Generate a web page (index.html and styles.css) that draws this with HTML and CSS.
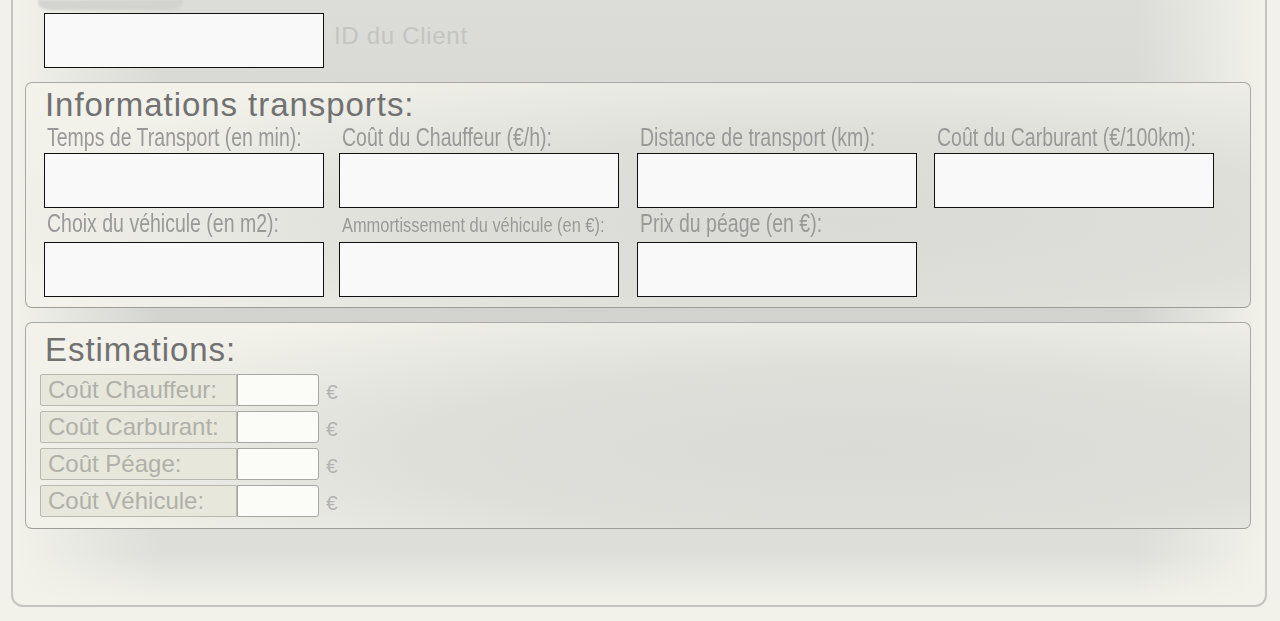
FILE: index.html
```html
<!DOCTYPE html>
<html lang="fr">
<head>
<meta charset="utf-8">
<title>Estimation transport</title>
<link rel="stylesheet" href="styles.css">
</head>
<body>
<div class="panel">
  <div class="blob"></div>
  <div class="id-row">
    <input class="box" type="text">
    <span class="id-label">ID du Client</span>
  </div>

  <div class="group info">
    <h2 class="title">Informations transports:</h2>
    <div class="fields">
      <div class="field top"><label class="flabel"><span>Temps de Transport (en min):</span></label><input class="box" type="text"></div>
      <div class="field top"><label class="flabel"><span>Coût du Chauffeur (€/h):</span></label><input class="box" type="text"></div>
      <div class="field top"><label class="flabel"><span>Distance de transport (km):</span></label><input class="box" type="text"></div>
      <div class="field top"><label class="flabel"><span>Coût du Carburant (€/100km):</span></label><input class="box" type="text"></div>
      <div class="field"><label class="flabel"><span>Choix du véhicule (en m2):</span></label><input class="box" type="text"></div>
      <div class="field"><label class="flabel small"><span>Ammortissement du véhicule (en €):</span></label><input class="box" type="text"></div>
      <div class="field"><label class="flabel"><span>Prix du péage (en €):</span></label><input class="box" type="text"></div>
    </div>
  </div>

  <div class="group est">
    <h2 class="title">Estimations:</h2>
    <div class="rows">
      <div class="row"><span class="rlabel">Coût Chauffeur:</span><input class="rin" type="text"><span class="eur">€</span></div>
      <div class="row"><span class="rlabel">Coût Carburant:</span><input class="rin" type="text"><span class="eur">€</span></div>
      <div class="row"><span class="rlabel">Coût Péage:</span><input class="rin" type="text"><span class="eur">€</span></div>
      <div class="row"><span class="rlabel">Coût Véhicule:</span><input class="rin" type="text"><span class="eur">€</span></div>
    </div>
  </div>
</div>
</body>
</html>
```
FILE: styles.css
```css
html, body {
  margin: 0;
  padding: 0;
  background: #f2f2ea;
  font-family: "Liberation Sans", Arial, sans-serif;
}

.panel {
  box-sizing: border-box;
  margin-left: 11px;
  width: 1256px;
  border: 2px solid #c4c4c0;
  border-top: none;
  border-radius: 0 0 12px 12px;
  padding: 0 14px 76px 12px;
  background:
    linear-gradient(to right, #f2f2eb 0px, rgba(242, 242, 235, 0) 150px, rgba(242, 242, 235, 0) calc(100% - 130px), #f2f2eb 100%),
    linear-gradient(to top, #f2f2eb 0px, rgba(242, 242, 235, 0) 50px),
    linear-gradient(to bottom, #dcdcd8 0%, #d2d2cf 50%, #dbdbd7 85%, #e2e2dd 100%);
}

.blob {
  margin-left: 13px;
  width: 145px;
  height: 10px;
  background: #d3d3cf;
  border-radius: 0 0 14px 14px / 0 0 8px 8px;
  filter: blur(1px);
}

.id-row {
  display: flex;
  align-items: flex-start;
  margin-top: 3px;
  padding-left: 19px;
}

.box {
  box-sizing: border-box;
  width: 280px;
  height: 55px;
  margin: 0;
  padding: 0 6px;
  border: 1px solid #111;
  background: #f9f9f9;
  font: 18px "Liberation Sans", Arial, sans-serif;
  outline: none;
}

.id-label {
  margin-left: 10px;
  margin-top: 9px;
  font-size: 24px;
  line-height: 28px;
  letter-spacing: 0.7px;
  color: #c4c4c2;
}

.group {
  border: 1px solid #a9a9a5;
  border-bottom-color: #9c9c98;
  border-radius: 7px;
  background: radial-gradient(ellipse 72% 80% at 68% 62%, #dadad6 0%, #dfdfda 50%, #f2f2eb 100%);
}

.info {
  margin-top: 14px;
  padding: 7px 0 10px 18px;
}

.est {
  margin-top: 14px;
  padding: 12px 0 11px 14px;
}

.title {
  margin: 0;
  font-size: 33px;
  line-height: 29px;
  font-weight: normal;
  letter-spacing: 0.95px;
  color: #717171;
}

.info .title {
  padding-left: 1px;
}

.est .title {
  padding-left: 5px;
}

.fields {
  display: grid;
  grid-template-columns: 295px 298px 297px 280px;
}

.field {
  display: flex;
  flex-direction: column;
}

.flabel {
  box-sizing: border-box;
  display: block;
  height: 34px;
  padding: 3px 0 0 3px;
  font-size: 25px;
  line-height: 24px;
  color: #999;
  white-space: nowrap;
}

.field.top .flabel {
  padding-top: 6px;
}

.flabel span {
  display: inline-block;
  transform: scaleX(0.78);
  transform-origin: left center;
}

.flabel.small {
  padding-top: 5px;
  font-size: 20px;
  line-height: 24px;
}

.flabel.small span {
  transform: scaleX(0.82);
}

.rows {
  display: flex;
  flex-direction: column;
  gap: 5px;
  margin-top: 10px;
}

.row {
  display: flex;
  align-items: center;
  height: 32px;
}

.rlabel {
  box-sizing: border-box;
  width: 197px;
  height: 32px;
  padding-left: 7px;
  border: 1px solid #b9b9b1;
  border-radius: 2px 0 0 2px;
  background: #e7e7db;
  font-size: 24px;
  line-height: 30px;
  color: #b0b0aa;
  white-space: nowrap;
}

.rin {
  box-sizing: border-box;
  width: 82px;
  height: 32px;
  margin: 0;
  padding: 0 4px;
  border: 1px solid #a6a6a2;
  border-radius: 0 3px 3px 0;
  background: #fbfbf7;
  outline: none;
}

.eur {
  margin-left: 7px;
  padding-top: 4px;
  font-size: 21px;
  color: #b4b4b2;
}
```
